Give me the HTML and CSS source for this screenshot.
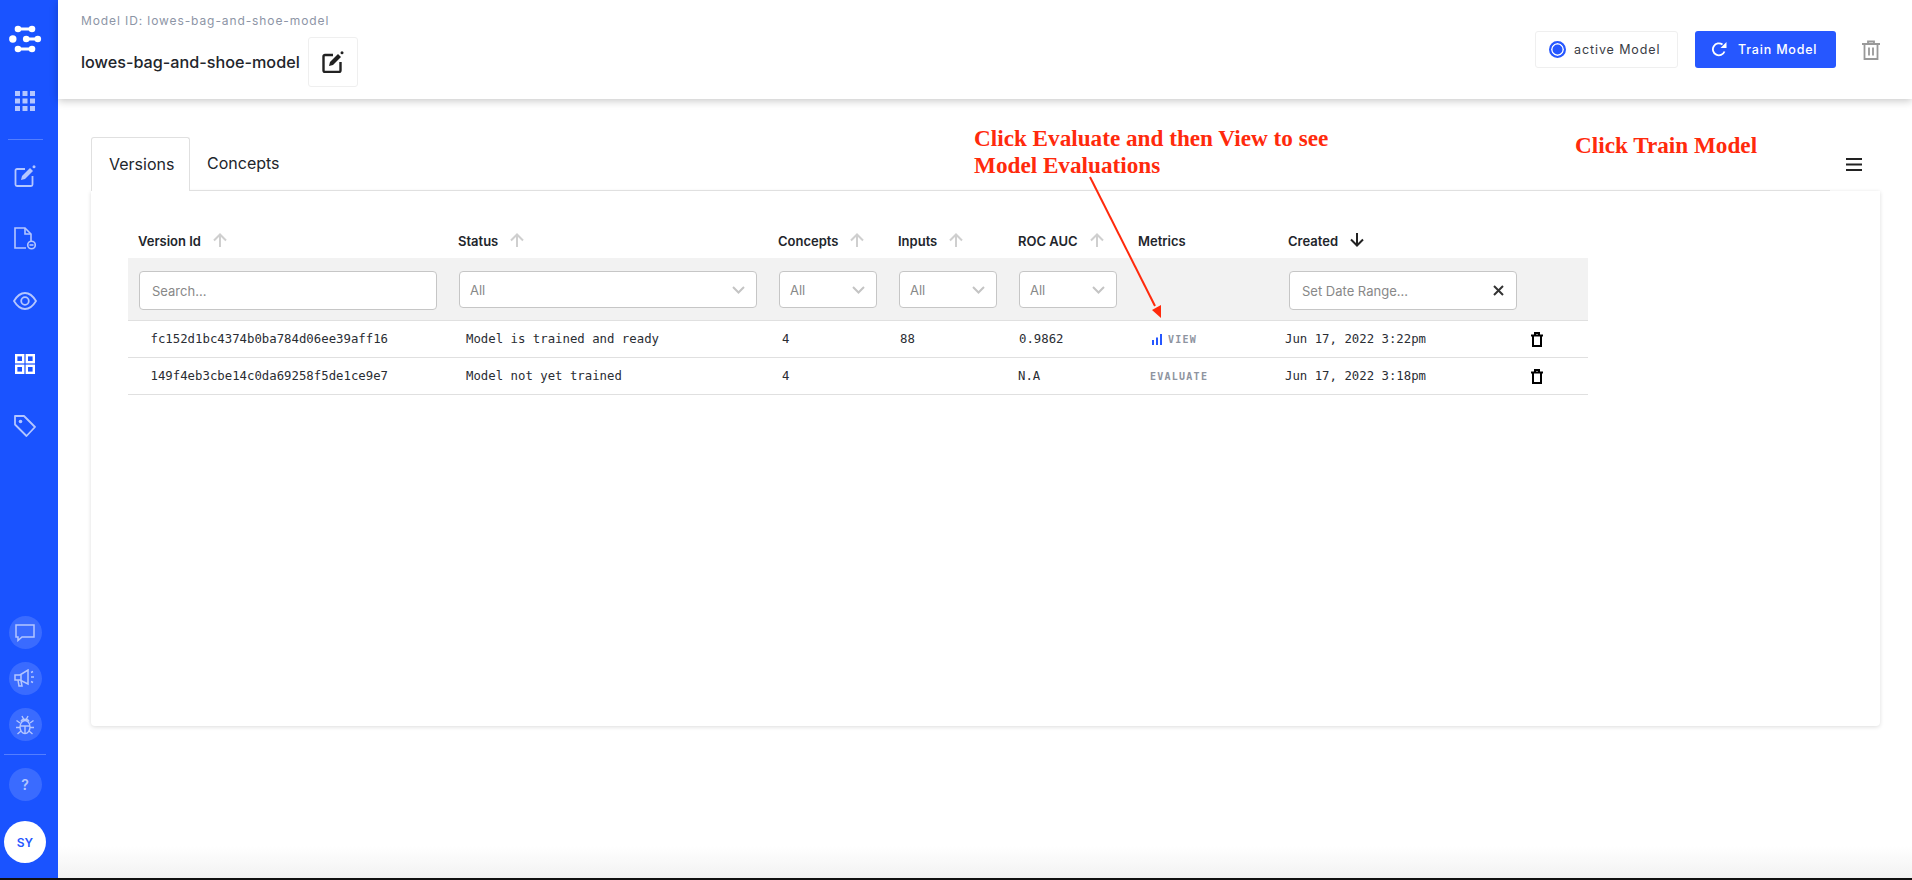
FILE: index.html
```html
<!DOCTYPE html>
<html lang="en">
<head>
<meta charset="utf-8">
<title>lowes-bag-and-shoe-model</title>
<link rel="stylesheet" href="styles.css">
</head>
<body>
<div class="app">
  <aside class="sidebar">
    <div class="nav-item logo-item">
      <svg width="34" height="30" viewBox="0 0 34 30"><g fill="#fff" stroke="#fff"><path d="M10 4h14M18 14h12M10 24h14" stroke-width="3"/><circle cx="10" cy="4" r="3.300" stroke="none"/><circle cx="24" cy="4" r="3.300" stroke="none"/><circle cx="4.800" cy="14" r="3.700" stroke="none"/><circle cx="18.200" cy="14" r="3.300" stroke="none"/><circle cx="29.800" cy="14" r="3.300" stroke="none"/><circle cx="10" cy="24" r="3.300" stroke="none"/><circle cx="24" cy="24" r="3.300" stroke="none"/></g></svg>
    </div>
    <div class="nav-item">
      <svg width="20" height="20" viewBox="0 0 20 20" fill="#b4c6ff"><rect x="0" y="0" width="5" height="5"/><rect x="7.500" y="0" width="5" height="5"/><rect x="15" y="0" width="5" height="5"/><rect x="0" y="7.500" width="5" height="5"/><rect x="7.500" y="7.500" width="5" height="5"/><rect x="15" y="7.500" width="5" height="5"/><rect x="0" y="15" width="5" height="5"/><rect x="7.500" y="15" width="5" height="5"/><rect x="15" y="15" width="5" height="5"/></svg>
    </div>
    <div class="side-rule side-rule-top"></div>
    <div class="nav-item nav-tool">
      <svg width="22" height="22" viewBox="0 0 22 22" fill="none" stroke="#b4c6ff" stroke-width="1.800"><path d="M11 4H3a1.500 1.500 0 0 0-1.500 1.500v14A1.500 1.500 0 0 0 3 21h14a1.500 1.500 0 0 0 1.500-1.500V11"/><path d="M7 15l1-4 8-8 3 3-8 8z" fill="#b4c6ff" stroke="none"/><circle cx="20" cy="1.800" r="1.500" fill="#b4c6ff" stroke="none"/></svg>
    </div>
    <div class="nav-item nav-tool">
      <svg width="22" height="23" viewBox="0 0 22 23" fill="none" stroke="#b4c6ff" stroke-width="1.600"><path d="M12 21H1V1h10l6 6v7"/><path d="M11 1v6h6"/><circle cx="17.500" cy="18" r="3.800"/><path d="M15.500 18h4"/></svg>
    </div>
    <div class="nav-item nav-tool">
      <svg width="24" height="18" viewBox="0 0 24 18" fill="none" stroke="#b4c6ff" stroke-width="1.800"><path d="M1 9c3-5 7-8 11-8s8 3 11 8c-3 5-7 8-11 8S4 14 1 9z"/><circle cx="12" cy="9" r="3.800"/></svg>
    </div>
    <div class="nav-item nav-tool">
      <svg width="20" height="20" viewBox="0 0 20 20" fill="none" stroke="#fff" stroke-width="2.400"><rect x="1.200" y="1.200" width="7" height="7"/><rect x="11.800" y="1.200" width="7" height="7"/><rect x="1.200" y="11.800" width="7" height="7"/><rect x="11.800" y="11.800" width="7" height="7"/></svg>
    </div>
    <div class="nav-item nav-tool">
      <svg width="22" height="22" viewBox="0 0 22 22" fill="none" stroke="#b4c6ff" stroke-width="1.800"><path d="M1 1h9l11 11-8.500 9L1 9.500z" stroke-linejoin="round"/><circle cx="6.500" cy="6.500" r="1.800" fill="#b4c6ff" stroke="none"/></svg>
    </div>
    <div class="side-bottom">
      <div class="round-btn">
        <svg width="20" height="18" viewBox="0 0 20 18" fill="none" stroke="#b4c6ff" stroke-width="1.500"><path d="M1 1h18v12H7l-4 3.500V13H1z"/></svg>
      </div>
      <div class="round-btn">
        <svg width="22" height="20" viewBox="0 0 22 20" fill="none" stroke="#b4c6ff" stroke-width="1.500"><path d="M1 6h5l8-5v14l-8-4H1z"/><path d="M4 11l1 6h3l-1-5.500M7 6v5"/><path d="M17 3.500l2-1M17 8h3M17 12.500l2 1"/></svg>
      </div>
      <div class="round-btn">
        <svg width="20" height="20" viewBox="0 0 20 20" fill="none" stroke="#b4c6ff" stroke-width="1.400"><ellipse cx="10" cy="12" rx="5" ry="6.500"/><path d="M6 6.500c1-3 7-3 8 0M5 11h10M10 11v7M7 1l1.500 3M13 1l-1.500 3M5 8L1.500 5.500M15 8l3.500-2.500M5 12.500H1M15 12.500h4M6 16l-3.500 3M14 16l3.500 3"/></svg>
      </div>
      <div class="side-rule side-rule-bottom"></div>
      <div class="round-btn help">?</div>
      <div class="avatar">SY</div>
    </div>
  </aside>

  <div class="main">
    <header class="topbar">
      <div class="model-info">
        <div class="model-id">Model ID: lowes-bag-and-shoe-model</div>
        <div class="title-row">
          <h1 class="model-title">lowes-bag-and-shoe-model</h1>
          <div class="edit-box">
            <svg width="22" height="22" viewBox="0 0 22 22" fill="none" stroke="#222" stroke-width="2.400"><path d="M11 4H3a1.500 1.500 0 0 0-1.500 1.500v14A1.500 1.500 0 0 0 3 21h14a1.500 1.500 0 0 0 1.500-1.500V11"/><path d="M7 15l1-4 8-8 3 3-8 8z" fill="#222" stroke="none"/><circle cx="20" cy="1.800" r="1.500" fill="#222" stroke="none"/></svg>
          </div>
        </div>
      </div>
      <div class="top-actions">
        <div class="active-box"><span class="radio"></span>active Model</div>
        <button class="train-btn">
          <svg width="15" height="15" viewBox="0 0 15 15" fill="none" stroke="#fff" stroke-width="1.800"><path d="M12.500 9.500A6 6 0 1 1 10.500 2.500"/><path d="M14.500 0v6h-6z" fill="#fff" stroke="none"/></svg>
          Train Model
        </button>
        <svg class="top-trash" width="18" height="20" viewBox="0 0 18 20" fill="none" stroke="#999" stroke-width="1.800"><path d="M0 4h18M6 4V1.500h6V4M2.500 4v15h13V4M7 7.500v8M11 7.500v8"/></svg>
      </div>
    </header>

    <section class="content">
      <div class="tabs-row">
        <div class="tabs">
          <div class="tab tab-active">Versions</div>
          <div class="tab">Concepts</div>
        </div>
        <div class="tabs-menu">
          <svg width="16" height="13" viewBox="0 0 16 13" fill="#222"><rect width="16" height="2"/><rect y="5.500" width="16" height="2"/><rect y="11" width="16" height="2"/></svg>
        </div>
      </div>
      <div class="card">
        <div class="table">
          <div class="row head-row">
            <div class="th">Version Id<svg class="sort" width="14" height="14" viewBox="0 0 14 14"><path d="M7 14V1.500M1 7.500l6-6 6 6"/></svg></div>
            <div class="th">Status<svg class="sort" width="14" height="14" viewBox="0 0 14 14"><path d="M7 14V1.500M1 7.500l6-6 6 6"/></svg></div>
            <div class="th">Concepts<svg class="sort" width="14" height="14" viewBox="0 0 14 14"><path d="M7 14V1.500M1 7.500l6-6 6 6"/></svg></div>
            <div class="th">Inputs<svg class="sort" width="14" height="14" viewBox="0 0 14 14"><path d="M7 14V1.500M1 7.500l6-6 6 6"/></svg></div>
            <div class="th">ROC AUC<svg class="sort" width="14" height="14" viewBox="0 0 14 14"><path d="M7 14V1.500M1 7.500l6-6 6 6"/></svg></div>
            <div class="th">Metrics</div>
            <div class="th">Created<svg class="sort sort-on" width="14" height="14" viewBox="0 0 14 14"><path d="M7 0v12.500M1 6.500l6 6 6-6"/></svg></div>
            <div class="th"></div>
          </div>
          <div class="row filter-row">
            <div class="field field-tall"><span class="ph-search">Search...</span></div>
            <div class="field"><span>All</span><svg class="chev" width="13" height="8" viewBox="0 0 13 8"><path d="M1 1l5.500 5.500L12 1"/></svg></div>
            <div class="field"><span>All</span><svg class="chev" width="13" height="8" viewBox="0 0 13 8"><path d="M1 1l5.500 5.500L12 1"/></svg></div>
            <div class="field"><span>All</span><svg class="chev" width="13" height="8" viewBox="0 0 13 8"><path d="M1 1l5.500 5.500L12 1"/></svg></div>
            <div class="field"><span>All</span><svg class="chev" width="13" height="8" viewBox="0 0 13 8"><path d="M1 1l5.500 5.500L12 1"/></svg></div>
            <div></div>
            <div class="field field-tall field-date"><span class="ph-search">Set Date Range...</span><svg class="clear" width="11" height="11" viewBox="0 0 11 11"><path d="M1 1l9 9M10 1l-9 9"/></svg></div>
            <div></div>
          </div>
          <div class="row data-row">
            <div class="td td-id">fc152d1bc4374b0ba784d06ee39aff16</div>
            <div class="td td-status">Model is trained and ready</div>
            <div class="td td-concepts">4</div>
            <div class="td td-inputs">88</div>
            <div class="td td-roc">0.9862</div>
            <div class="td td-metric">
              <svg class="bars" width="10" height="11" viewBox="0 0 10 11" fill="#2657ff"><rect x="0" y="6" width="2" height="5"/><rect x="4" y="3.500" width="2" height="7.500"/><rect x="8" y="0" width="2" height="11"/></svg>
              <span class="metric-link">VIEW</span>
            </div>
            <div class="td td-date">Jun 17, 2022 3:22pm</div>
            <div class="td td-del"><svg width="12" height="15" viewBox="0 0 12 15" fill="none" stroke="#000" stroke-width="2"><path d="M0 3.500h12M4 3V1h4v2M2 3.500V14h8V3.500"/></svg></div>
          </div>
          <div class="row data-row">
            <div class="td td-id">149f4eb3cbe14c0da69258f5de1ce9e7</div>
            <div class="td td-status">Model not yet trained</div>
            <div class="td td-concepts">4</div>
            <div class="td td-inputs"></div>
            <div class="td td-roc td-na">N.A</div>
            <div class="td td-evaluate"><span class="metric-link">EVALUATE</span></div>
            <div class="td td-date">Jun 17, 2022 3:18pm</div>
            <div class="td td-del"><svg width="12" height="15" viewBox="0 0 12 15" fill="none" stroke="#000" stroke-width="2"><path d="M0 3.500h12M4 3V1h4v2M2 3.500V14h8V3.500"/></svg></div>
          </div>
        </div>
      </div>
    </section>
  </div>
</div>

<div class="note note-eval">Click Evaluate and then View to see<br>Model Evaluations</div>
<div class="note note-train">Click Train Model</div>
<svg class="note-arrow" width="100" height="150" viewBox="0 0 100 150"><path d="M4 2l65 129" stroke="#ff2a0c" stroke-width="2" fill="none"/><path d="M75 143l-9-8 9-5z" fill="#ff2a0c"/></svg>
</body>
</html>
```

FILE: styles.css
```css
* { box-sizing: border-box; }
html, body { margin: 0; height: 880px; overflow: hidden; }
body {
  position: relative;
  font-family: Inter, "Liberation Sans", sans-serif;
  color: #22252b;
  background: #fff;
  border-bottom: 2px solid #111;
}
.app { display: flex; height: 878px; }

/* sidebar */
.sidebar {
  width: 58px;
  flex: none;
  background: #1a53ff;
  padding-right: 8px;
  display: flex;
  flex-direction: column;
  align-items: center;
}
.nav-item { height: 61px; width: 50px; display: flex; align-items: center; justify-content: center; flex: none; }
.logo-item { margin-top: 9px; }
.nav-tool { height: 62.5px; }
.side-rule { background: rgba(255,255,255,.25); height: 1px; flex: none; }
.side-rule-top { width: 35px; margin: 8px 0 5px; }
.side-rule-bottom { width: 42px; margin: 0; }
.side-bottom {
  margin-top: auto;
  padding-bottom: 15px;
  display: flex;
  flex-direction: column;
  align-items: center;
  gap: 13px;
}
.round-btn {
  width: 33px; height: 33px; border-radius: 50%;
  background: rgba(255,255,255,.14);
  display: flex; align-items: center; justify-content: center;
}
.help { color: #b4c6ff; font-size: 14px; font-weight: 600; }
.avatar {
  width: 42px; height: 42px; border-radius: 50%;
  background: #fff; color: #2657ff;
  font-size: 12px; font-weight: 600;
  display: flex; align-items: center; justify-content: center;
  margin-top: 7px;
}

/* main */
.main {
  flex: 1;
  min-width: 0;
  background: linear-gradient(to bottom, #fff calc(100% - 32px), #f2f2f2 100%);
}
.topbar {
  height: 99px;
  background: #fff;
  box-shadow: 0 2px 8px rgba(0,0,0,.22);
  display: flex;
  align-items: center;
  justify-content: space-between;
  padding: 0 32px 0 23px;
  position: relative;
}
.model-info { align-self: flex-start; padding-top: 14px; }
.model-id { font-size: 12px; line-height: 14px; color: #8d95a6; letter-spacing: .9px; }
.title-row { display: flex; align-items: center; gap: 8px; margin-top: 9px; }
.model-title { margin: 0; font-size: 16.2px; font-weight: 500; color: #22252b; }
.edit-box {
  width: 50px; height: 50px;
  border: 1px solid #efefef; border-radius: 3px;
  display: flex; align-items: center; justify-content: center;
}
.top-actions { display: flex; align-items: center; }
.active-box {
  width: 143px; height: 37px;
  border: 1px solid #efefef; border-radius: 3px;
  display: flex; align-items: center;
  padding-left: 13px;
  gap: 8px;
  font-size: 12.5px; letter-spacing: .9px; color: #3a3d45;
  font-weight: 400;
}
.radio {
  width: 17px; height: 17px; border-radius: 50%;
  border: 2px solid #2657ff;
  background: #2657ff;
  box-shadow: inset 0 0 0 1.5px #fff;
}
.train-btn {
  width: 141px; height: 37px;
  margin: 0 26px 0 17px;
  background: #2657ff; color: #fff;
  border: 0; border-radius: 3px;
  display: flex; align-items: center; justify-content: flex-start;
  padding: 0 0 0 17px;
  gap: 11px;
  font-family: inherit; font-size: 12.5px; font-weight: 500; letter-spacing: .8px;
}

/* content */
.content { padding: 38px 32px 0 33px; }
.tabs-row { display: flex; height: 54px; }
.tabs { flex: 1; display: flex; border-bottom: 1px solid #e0e0e0; height: 54px; }
.tab { font-size: 16px; line-height: 53px; padding: 0 17px; color: #22252b; }
.tab-active {
  width: 99px;
  height: 54px;
  border: 1px solid #e0e0e0;
  border-bottom: 0;
  border-radius: 3px 3px 0 0;
  background: #fff;
  line-height: 52px;
}
.tabs-menu { width: 50px; padding-top: 18px; padding-left: 16px; }
.card {
  height: 535px;
  background: #fff;
  border-radius: 0 0 4px 4px;
  box-shadow: 0 1px 4px rgba(0,0,0,.14);
  padding: 33px 0 0 37px;
}
.table { width: 1460px; }
.row { display: grid; grid-template-columns: 320px 320px 120px 120px 120px 150px 250px 60px; }
.head-row { height: 34px; align-items: center; }
.th {
  font-size: 13px; font-weight: 600; color: #22252b;
  padding-left: 10px;
  display: flex; align-items: center;
  gap: 12px;
}
.sort { fill: none; stroke: #cfcfcf; stroke-width: 2; flex: none; margin-top: -2px; }
.sort-on { stroke: #222; }
.filter-row { height: 63px; background: #f2f2f2; padding-top: 13px; border-bottom: 1px solid #e0e0e0; }
.field {
  margin-left: 11px;
  margin-right: 11px;
  height: 37px;
  background: #fff;
  border: 1px solid #c6c6c6;
  border-radius: 4px;
  display: flex; align-items: center; justify-content: space-between;
  padding: 0 11px 0 10px;
  font-size: 13px; color: #888;
}
.field-tall { height: 39px; padding-left: 12px; }
.field-date { margin-right: 11px; }
.chev { fill: none; stroke: #c4c4c4; stroke-width: 2; }
.clear { fill: none; stroke: #333; stroke-width: 2; margin-right: 1px; }
.data-row { height: 37px; align-items: center; border-bottom: 1px solid #e0e0e0; }
.td {
  font-family: "DejaVu Sans Mono", "Liberation Mono", monospace;
  font-size: 12.33px; color: #2a2d33;
  white-space: nowrap;
}
.td-id { padding-left: 22.5px; }
.td-status { padding-left: 18px; }
.td-concepts { padding-left: 14px; }
.td-inputs { padding-left: 12px; }
.td-roc { padding-left: 11px; }
.td-na { padding-left: 10px; }
.td-metric { padding-left: 24px; display: flex; align-items: center; gap: 6px; }
.td-evaluate { padding-left: 22px; }
.td-date { padding-left: 7px; }
.td-del { padding-left: 3px; display: flex; }
.metric-link { font-size: 10px; font-weight: 700; letter-spacing: 1.25px; color: #8e94a0; }

/* annotations pasted over the page */
.note {
  position: absolute;
  font-family: "Liberation Serif", serif;
  font-weight: 700;
  font-size: 23.2px;
  line-height: 27px;
  color: #ff2a0c;
  white-space: nowrap;
}
.note-eval { left: 974px; top: 125px; }
.note-train { left: 1575px; top: 132px; }
.note-arrow { position: absolute; left: 1086px; top: 175px; }
```
